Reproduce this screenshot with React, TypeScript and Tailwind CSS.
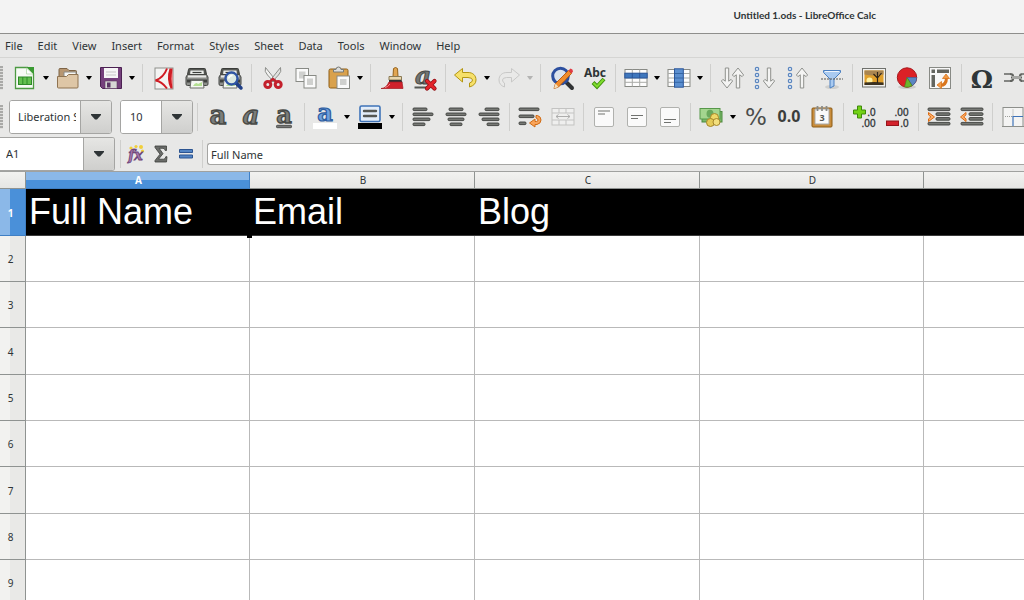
import React from "react";

type IconProps = { children: React.ReactNode };

function Icon({ children }: IconProps) {
  return (
    <svg viewBox="0 0 28 28" className="h-7 w-7 shrink-0 overflow-visible" aria-hidden="true">
      {children}
    </svg>
  );
}

function Tool({ label, children, disabled }: { label: string; children: React.ReactNode; disabled?: boolean }) {
  return (
    <button
      type="button"
      aria-label={label}
      disabled={disabled}
      className="flex h-9 w-[33px] shrink-0 items-center justify-center"
    >
      <Icon>{children}</Icon>
    </button>
  );
}

function Caret({ label, wide, faded }: { label: string; wide?: boolean; faded?: boolean }) {
  return (
    <button
      type="button"
      aria-label={label}
      disabled={faded}
      className={`flex h-9 shrink-0 items-center justify-center ${wide ? "w-3" : "w-[10px]"}`}
    >
      <svg viewBox="0 0 6 4" className={`h-1 w-1.5 ${faded ? "fill-[#b4b4b3]" : "fill-black"}`} aria-hidden="true">
        <path d="M0 0h6L3.6 3.6H2.4z" />
      </svg>
    </button>
  );
}

function Sep({ wide }: { wide?: boolean }) {
  return (
    <div className={`flex h-7 shrink-0 justify-center ${wide ? "w-[10px]" : "w-2"}`}>
      <div className="w-px bg-[#cfcfcd]" />
    </div>
  );
}

function Grip() {
  return (
    <div className="h-6 w-[3px] shrink-0 bg-[repeating-linear-gradient(to_bottom,#a9a9a7_0px,#a9a9a7_2px,#dededc_2px,#dededc_3px)]" />
  );
}

function DropButton({ label }: { label: string }) {
  return (
    <button
      type="button"
      aria-label={label}
      className="flex w-[31px] shrink-0 items-center justify-center border-l border-[#a5a5a3] bg-linear-to-b from-[#e6e6e4] to-[#cfcfcd]"
    >
      <svg viewBox="0 0 10 6" className="h-1.5 w-2.5 fill-[#2e3436]" aria-hidden="true">
        <path d="M0 0h10v1L6 5.6H4L0 1z" />
      </svg>
    </button>
  );
}

const ink = "#555753";
const edge = "#3b3d3a";

function LetterA({ italic, underline }: { italic?: boolean; underline?: boolean }) {
  return (
    <>
      <text
        x="14"
        y={underline ? 20 : 21}
        textAnchor="middle"
        fontFamily="DejaVu Serif, serif"
        fontWeight="bold"
        fontStyle={italic ? "italic" : "normal"}
        fontSize={underline ? 24 : 26}
        fill="#7b7d7a"
        stroke="#474946"
        strokeWidth="1.3"
      >
        a
      </text>
      {underline && <rect x="6.5" y="22.3" width="15" height="2.4" rx=".8" fill="#777" stroke={edge} strokeWidth=".8" />}
    </>
  );
}

function Lines({ rows }: { rows: number[][] }) {
  return (
    <>
      {rows.map(([x, y, w]) => (
        <rect key={y} x={x} y={y} width={w} height="2.6" rx="1" fill="#777975" stroke={edge} strokeWidth=".9" />
      ))}
    </>
  );
}

function DownArrow({ x }: { x: number }) {
  return (
    <path
      d={`M${x - 1.7} 4h3.4v13.2l2.4-1.8 1.5 1.6L${x} 24l-5.6-7 1.5-1.6 2.4 1.8z`}
      fill="#f4f4f3"
      stroke="#8f918d"
      strokeLinejoin="round"
    />
  );
}

function UpArrow({ x }: { x: number }) {
  return (
    <path
      d={`M${x - 1.7} 24h3.4V10.8l2.4 1.8 1.5-1.6L${x} 4l-5.6 7 1.5 1.6 2.4-1.8z`}
      fill="#f4f4f3"
      stroke="#8f918d"
      strokeLinejoin="round"
    />
  );
}

function Dots() {
  return (
    <>
      {[5, 11, 17, 23].map((y) => (
        <circle key={y} cx="6" cy={y} r="1.7" fill="#e6effa" stroke="#5b86bf" strokeWidth="1.2" />
      ))}
    </>
  );
}

function GridIcon({ column }: { column?: boolean }) {
  return (
    <>
      <rect x="3" y="5.5" width="22" height="17" fill="#fdfdfd" stroke="#888a85" />
      <path d="M3 9.5h22M3 14h22M3 18.3h22M10.3 5.5v17M17.7 5.5v17" stroke="#a9aba7" />
      {column ? (
        <>
          <rect x="9.5" y="4.8" width="8.8" height="18.4" fill="#5b8fd0" stroke="#2b569a" />
          <path d="M10 9.5h8M10 14h8M10 18.3h8" stroke="#3465a4" />
        </>
      ) : (
        <>
          <rect x="2.8" y="9.2" width="22.4" height="4.8" fill="#3f77bd" stroke="#2b569a" />
          <path d="M10.3 9v5M17.7 9v5" stroke="#2b569a" />
        </>
      )}
    </>
  );
}

function Page({ y }: { y: number }) {
  return (
    <>
      <rect x="4.5" y="4.5" width="19" height="19" rx="1.5" fill="#fafafa" stroke="#b0b1ae" />
      <path d={`M8 ${y}h12M8 ${y + 3}h7`} stroke="#70726f" strokeWidth="1.1" />
    </>
  );
}

function Printer() {
  return (
    <>
      <path d="M5.500 5.500q0-1 1-1h15q1 0 1 1l1 5H4.500z" fill="#555753" stroke="#3a3c39" />
      <path d="M7.500 6.500h13l.5 4.500H7z" fill="#eceeeb" />
      <path d="M9.500 8.500h9" stroke="#3a3c39" strokeWidth="1.200" />
      <path d="M4.500 10.500h19l1.500 2.500v7q0 1.500-1.500 1.500h-19Q3 21.500 3 20v-7z" fill="#8d8f8b" stroke="#454744" />
      <path d="M5 12.500h18" stroke="#e8e9e7" strokeWidth="2" />
      <path d="M4 15.500h20v3H4z" fill="#3f413e" />
      <path d="M8 16.500h12l1 7.500H7z" fill="#f5f7f2" stroke="#6a6c69" />
      <path d="M10 22q3-5 5-2l4-2v4z" fill="#b4e092" />
    </>
  );
}

function Indent({ back }: { back?: boolean }) {
  return (
    <>
      <Lines rows={[[3, 5, 22], [11, 9.8, 14], [11, 14.6, 14], [3, 19.4, 22]]} />
      <path
        d={back ? "M8 9.5v2.4l-2.4 2 2.4 2v2.6L2.5 14z" : "M3.5 9.5v2.4l2.4 2-2.4 2v2.6L9.5 14z"}
        fill="#fcaf6a"
        stroke="#dc6b13"
        strokeLinejoin="round"
      />
    </>
  );
}

function Decimals({ top, bottom }: { top: string; bottom: string }) {
  return (
    <g textAnchor="end" fontFamily="Liberation Sans, sans-serif" fontSize="10" fill="#2e3436" stroke="#2e3436" strokeWidth=".3">
      <text x="24.500" y="13">
        {top}
      </text>
      <text x="24.500" y="24">
        {bottom}
      </text>
    </g>
  );
}

const menus = ["File", "Edit", "View", "Insert", "Format", "Styles", "Sheet", "Data", "Tools", "Window", "Help"];

function StandardToolbar() {
  return (
    <div role="toolbar" className="flex h-[39px] items-center">
      <Grip />
      <div className="flex items-center pl-[5px]">
        <Tool label="New">
          <path d="M4.5 3.5h12l6 6v15h-18z" fill="#f7faf5" stroke="#4d9a43" strokeWidth="1.3" />
          <path d="M16 3h7v7z" fill="#3a9a32" />
          <path d="M15.500 4v6h6.500z" fill="#fff" stroke="#a6d49d" strokeWidth=".7" />
          <rect x="7.5" y="13" width="13" height="7.5" fill="#63c04f" stroke="#2f8a28" />
          <path d="M11.8 13v7.5M16 13v7.5" stroke="#2f8a28" />
        </Tool>
        <Caret label="New options" />
        <Tool label="Open">
          <path d="M5 5.5q0-1 1-1h7l2 2h6.5q1 0 1 1V16H5z" fill="#b79671" stroke="#7d6446" />
          <path d="M10 8h12v8H10z" fill="#f6f6f4" stroke="#8a8a86" />
          <path d="M3.500 12.500h9l2-2h9.500V23q0 1-1 1H4.500q-1 0-1-1z" fill="#dec6a6" stroke="#8f7351" />
        </Tool>
        <Caret label="Open options" />
        <Tool label="Save">
          <path d="M3.5 3.5h21v21h-19l-2-2z" fill="#75407c" stroke="#4b2152" />
          <rect x="7" y="4" width="14" height="10" fill="#f6f6f6" />
          <path d="M9 8h10M9 11h10" stroke="#c6c6c6" />
          <path d="M8 17h12v7.5H8z" fill="#d7d7d5" stroke="#5b3560" strokeWidth=".6" />
          <rect x="10" y="18.5" width="3.5" height="5" fill="#5c3566" />
        </Tool>
        <Caret label="Save options" />
        <Sep wide />
        <Tool label="Export as PDF">
          <rect x="5" y="4" width="18" height="21" fill="#f4f4f3" stroke="#8d8f8b" />
          <path d="M17 4.500C15 10 11 14.500 5.500 16.500 10 17 14 20.500 17 24.500" fill="none" stroke="#d01c24" strokeWidth="2" strokeLinejoin="bevel" />
          <path d="M22.500 4.500h-3q-3.500 10 1 20h2z" fill="#d01c24" />
          <path d="M22.500 6q-2 8.500 0 17z" fill="#f4a9ac" />
        </Tool>
        <Tool label="Print">
          <Printer />
        </Tool>
        <Tool label="Print Preview">
          <Printer />
          <path d="m20 19 5 5" stroke="#1f3f87" strokeWidth="3.5" strokeLinecap="round" />
          <circle cx="15.5" cy="14.500" r="6" fill="#dce9e2" stroke="#2f55a4" strokeWidth="2.4" />
          <path d="M12.5 14.500q1-3 4-3" fill="none" stroke="#fff" strokeWidth="1.5" />
        </Tool>
        <Sep wide />
        <Tool label="Cut">
          <path d="M6.5 3.5q-1.500 4 2 7.500l6.500 7 1.500-2z" fill="#f2f2f1" stroke="#8c8e8a" />
          <path d="M21.5 3.5q1.500 4-2 7.500L13 18l-1.500-2z" fill="#e1e2e0" stroke="#8c8e8a" />
          <circle cx="8.800" cy="20.5" r="3" fill="none" stroke="#c3202c" strokeWidth="3" />
          <circle cx="19.200" cy="20.5" r="3" fill="none" stroke="#c3202c" strokeWidth="3" />
          <path d="m11 17.5 3-2.500 3 2.500" fill="none" stroke="#c3202c" strokeWidth="2.400" />
        </Tool>
        <Tool label="Copy">
          <rect x="4" y="4.5" width="12.5" height="13" fill="#fafafa" stroke="#888a85" />
          <rect x="7" y="7.5" width="6.5" height="7" fill="#cfd0ce" />
          <rect x="12" y="11.5" width="12" height="12.5" fill="#fafafa" stroke="#888a85" />
          <rect x="15" y="14.5" width="6" height="6.5" fill="#cfd0ce" />
        </Tool>
        <Tool label="Paste">
          <rect x="4" y="5" width="19" height="19" rx="1.5" fill="#d9a14c" stroke="#8f5f17" />
          <path d="M8.5 8V5.500h2.500q0-2.500 2.500-2.500T16 5.500h2.500V8z" fill="#dcdddb" stroke="#777975" />
          <rect x="12" y="12" width="12.5" height="12.5" fill="#fafafa" stroke="#888a85" />
          <rect x="15" y="15" width="6.500" height="6" fill="#cfd0ce" />
        </Tool>
        <Caret label="Paste options" />
        <Sep wide />
        <Tool label="Clone Formatting">
          <path d="M15.5 4.5q2-2 4 0l.5 8h-5z" fill="#e0a552" stroke="#95631c" />
          <path d="M11 12.5h12.5V16H11z" fill="#e8d6ae" stroke="#8a7a55" />
          <path d="M11 16h12.5l1 2.500H11z" fill="#2f3133" />
          <path d="M11 18h13l1 6.500H3q5 0 8-6.500z" fill="#d0212b" stroke="#a21820" strokeWidth=".7" />
          <path d="M12 20q-2 3-5 3.500" stroke="#f08a90" fill="none" />
        </Tool>
        <Tool label="Clear Direct Formatting">
          <text x="12" y="20" textAnchor="middle" fontFamily="DejaVu Serif, serif" fontStyle="italic" fontWeight="bold" fontSize="25" fill="#747673" stroke="#474946" strokeWidth="1">
            a
          </text>
          <rect x="3.5" y="22.5" width="12" height="2" fill={ink} />
          <path d="m16 17 7.500 7.500m0-7.500L16 24.500" stroke="#8d0b10" strokeWidth="4.2" strokeLinecap="round" />
          <path d="m16 17 7.500 7.500m0-7.500L16 24.500" stroke="#e3242b" strokeWidth="2.8" strokeLinecap="round" />
        </Tool>
        <Sep />
        <Tool label="Undo">
          <path d="M2.5 11 10.500 4.500v4H16c5 0 8 3 8 7.500q0 5-6.500 7V19q3-.8 3-3t-4.500-2.500h-5.500v4.500z" fill="#f6e06a" stroke="#b39613" strokeLinejoin="round" />
        </Tool>
        <Caret label="Undo options" />
        <Tool label="Redo" disabled>
          <path d="M24.5 11 16.500 4.500v4H12c-5 0-8 3-8 7.500q0 5 5.500 7V19q-2-.8-2-3t4-2.500h5v4.500z" fill="#e9e9e8" stroke="#c8c8c7" strokeLinejoin="round" />
        </Tool>
        <Caret label="Redo options" faded />
        <Sep wide />
        <Tool label="Find & Replace">
          <path d="m18 18 6 6" stroke="#303234" strokeWidth="4" strokeLinecap="round" />
          <circle cx="12.5" cy="12" r="7.8" fill="#dbe3ee" stroke="#2c4f9f" strokeWidth="3" />
          <path d="m6 24.5 1.500-5L20.500 6.500l3 3L10.500 23z" fill="#f08c2c" stroke="#b4550c" strokeWidth=".9" />
          <path d="m20.5 6.5 2-2q2.500.5 2.500 3l-1.500 2z" fill="#e03a44" />
          <path d="m6 24.5 1.500-5 3 3.500z" fill="#f5deb8" />
        </Tool>
        <Tool label="Spelling">
          <text x="14" y="13" textAnchor="middle" fontFamily="Noto Sans, sans-serif" fontWeight="bold" fontSize="12" fill="#2e3436">
            Abc
          </text>
          <path d="m12 18.5 4 4 7-7.500" fill="none" stroke="#3f8f0c" strokeWidth="4" />
          <path d="m12.500 19 3.500 3.500 6.500-7" fill="none" stroke="#7fdc2e" strokeWidth="2.2" />
        </Tool>
        <Sep />
        <Tool label="Row">
          <GridIcon />
        </Tool>
        <Caret label="Row options" />
        <Tool label="Column">
          <GridIcon column />
        </Tool>
        <Caret label="Column options" />
        <Sep wide />
        <Tool label="Sort">
          <DownArrow x={9} />
          <UpArrow x={20} />
        </Tool>
        <Tool label="Sort Ascending">
          <Dots />
          <DownArrow x={18} />
        </Tool>
        <Tool label="Sort Descending">
          <Dots />
          <UpArrow x={18} />
        </Tool>
        <Tool label="AutoFilter">
          <ellipse cx="15" cy="23" rx="7" ry="2" fill="#cfcfcd" />
          <path d="M6.500 6.500h17v2l-6.500 6.500V22l-4 2v-9L6.500 8.500z" fill="#a9caf0" stroke="#4a7fc0" strokeLinejoin="round" />
          <path d="M8 7.500h14" stroke="#edf4fc" />
          <path d="M4 15h22" stroke="#555753" strokeDasharray="2 1" />
        </Tool>
        <Sep wide />
        <Tool label="Insert Image">
          <rect x="2.5" y="4.5" width="23" height="18.5" fill="#f0f0ee" stroke="#6f716d" />
          <rect x="4.5" y="6.5" width="19" height="14.5" fill="#e0a02c" />
          <path d="M4.500 6.500h19v4q-10 2-19 0z" fill="#a98550" />
          <circle cx="9.500" cy="16.500" r="3" fill="#fff0a0" />
          <path d="M4.500 18.500q10-1 19 0V21h-19z" fill="#3b3120" />
          <path d="M17.500 19v-5l-4-4m4 4 4-5m-4 4V8" fill="none" stroke="#2b2318" strokeWidth="1.200" />
        </Tool>
        <Tool label="Insert Chart">
          <ellipse cx="14" cy="23" rx="9" ry="2" fill="#cdcdcb" />
          <circle cx="14" cy="13.500" r="9.700" fill="#dc2026" stroke="#a8161a" />
          <path d="M14 13.500h9.700a9.700 9.700 0 0 1-4.500 8.200z" fill="#5a86c2" stroke="#37629f" strokeWidth=".6" />
          <path d="m14 13.500 5.200 8.200a9.700 9.700 0 0 1-7.700 1.200z" fill="#6cb52d" stroke="#44821a" strokeWidth=".6" />
        </Tool>
        <Tool label="Pivot Table">
          <rect x="3.5" y="3.5" width="21" height="21" fill="#f8f8f8" stroke="#888a85" />
          <path d="M5.5 5.500H9V9H5.500zM11 5.500h12V9H11zM5.500 11H9v12H5.500z" fill="#63655f" />
          <path d="M14 21.500q6.500 0 6.500-8" fill="none" stroke="#d9751c" strokeWidth="3" />
          <path d="m16.500 14.500 3.500-4.500 3.500 4.500zM15.500 17.500v7L11 21z" fill="#f29a45" stroke="#d9751c" strokeWidth=".8" />
        </Tool>
        <Sep wide />
        <Tool label="Special Character">
          <text x="13" y="23.500" textAnchor="middle" fontFamily="DejaVu Serif, serif" fontWeight="bold" fontSize="25" fill="#2f3638">
            Ω
          </text>
        </Tool>
        <Tool label="Insert Hyperlink">
          <path d="M2 10h6q3 0 3 2M2 17h6q3 0 3-2M26 10h-5q-3 0-3 2m8 5h-5q-3 0-3-2M9 13.500h11" fill="none" stroke="#61635f" strokeWidth="2.200" />
          <path d="M2 10h6M2 17h6M20 10h5M20 17h5M10 13.500h9" stroke="#b9bab7" strokeWidth=".8" />
        </Tool>
      </div>
    </div>
  );
}

function FormatToolbar() {
  return (
    <div role="toolbar" className="flex h-10 items-center">
      <Grip />
      <div className="ml-1.5 flex h-[34px] w-[103px] shrink-0 overflow-hidden rounded-[3px] border border-[#a5a5a3] bg-white">
        <input
          aria-label="Font Name"
          defaultValue="Liberation Sans"
          className="min-w-0 flex-1 bg-white pr-1 pl-2 text-[11px] text-[#2e3436] outline-none"
        />
        <DropButton label="Font list" />
      </div>
      <div className="ml-2 flex h-[34px] w-[73px] shrink-0 overflow-hidden rounded-[3px] border border-[#a5a5a3] bg-white">
        <input
          aria-label="Font Size"
          defaultValue="10"
          className="min-w-0 flex-1 bg-white pl-[9px] text-[11px] text-[#2e3436] outline-none"
        />
        <DropButton label="Size list" />
      </div>
      <Sep />
      <Tool label="Bold">
        <LetterA />
      </Tool>
      <Tool label="Italic">
        <LetterA italic />
      </Tool>
      <Tool label="Underline">
        <LetterA underline />
      </Tool>
      <Sep />
      <Tool label="Font Color">
        <text x="14" y="18" textAnchor="middle" fontFamily="DejaVu Serif, serif" fontWeight="bold" fontSize="24" fill="#6d9fdd" stroke="#2d5da0" strokeWidth="1.200">
          a
        </text>
        <rect x="2" y="20" width="24" height="6" fill="#fff" />
      </Tool>
      <Caret label="Font Color options" wide />
      <Tool label="Background Color">
        <rect x="4" y="3" width="20" height="15.5" rx="1.5" fill="#e3edf9" stroke="#3f73b8" strokeWidth="1.6" />
        <path d="M8 8h12M8 13h12" stroke={ink} strokeWidth="2.4" strokeLinecap="round" />
        <rect x="2" y="20" width="24" height="6" fill="#000" />
      </Tool>
      <Caret label="Background Color options" wide />
      <Sep />
      <Tool label="Align Left">
        <Lines rows={[[4, 5, 14], [4, 10, 20], [4, 15, 17], [4, 20, 12]]} />
      </Tool>
      <Tool label="Center Horizontally">
        <Lines rows={[[7, 5, 14], [4, 10, 20], [6, 15, 16], [8, 20, 12]]} />
      </Tool>
      <Tool label="Align Right">
        <Lines rows={[[10, 5, 14], [4, 10, 20], [7, 15, 17], [12, 20, 12]]} />
      </Tool>
      <Sep />
      <Tool label="Wrap Text">
        <Lines rows={[[3, 5, 20], [3, 12, 15], [3, 19, 7]]} />
        <path d="M20 12.500h1.500q3.500 1 3.500 4.500t-4 4.500h-2V24L13.500 20l5.500-4v2.500h1.500q1.500 0 1.500-1.500T20 15z" fill="#f9a45a" stroke="#cf6a14" strokeLinejoin="round" />
      </Tool>
      <Tool label="Merge Cells" disabled>
        <rect x="3" y="5.5" width="22" height="16.5" fill="#efefee" stroke="#c3c3c2" />
        <path d="M3 10h22M3 17h22M10 5.500V10m7-4.500V10m-7 7v5m7-5v5" stroke="#c3c3c2" />
        <path d="M7 13.500h14M9.500 11.500l-2.500 2 2.500 2m9-4 2.500 2-2.500 2" fill="none" stroke="#adadac" />
      </Tool>
      <Sep />
      <Tool label="Align Top">
        <Page y={8} />
      </Tool>
      <Tool label="Center Vertically">
        <Page y={12.5} />
      </Tool>
      <Tool label="Align Bottom">
        <Page y={16.5} />
      </Tool>
      <Sep />
      <Tool label="Format as Currency">
        <rect x="5" y="8.5" width="20" height="10.5" fill="#79b968" stroke="#4c8a40" />
        <rect x="3" y="5.5" width="20" height="10.5" fill="#a4d58f" stroke="#56984a" />
        <ellipse cx="13" cy="10.800" rx="3.5" ry="4" fill="#6aa85c" />
        <circle cx="17.5" cy="14.5" r="4" fill="#f0d868" stroke="#a5862a" />
        <circle cx="13.5" cy="19.5" r="4" fill="#e6cb58" stroke="#a5862a" />
        <circle cx="19.5" cy="19" r="3.5" fill="#f3df7d" stroke="#a5862a" />
      </Tool>
      <Caret label="Currency options" wide />
      <Tool label="Format as Percent">
        <text x="14" y="22" textAnchor="middle" fontFamily="DejaVu Sans, sans-serif" fontSize="23" fill="#4b4d4b">
          %
        </text>
      </Tool>
      <Tool label="Format as Number">
        <text x="14" y="19" textAnchor="middle" fontFamily="Noto Sans, sans-serif" fontWeight="bold" fontSize="16" fill="#3c3e3c">
          0.0
        </text>
      </Tool>
      <Tool label="Format as Date">
        <rect x="4" y="5" width="20" height="19" rx="1" fill="#c98d3c" stroke="#8b5a14" />
        <path d="M7 6h14v15H7z" fill="#fafafa" stroke="#a9a9a7" />
        <path d="M9.500 3v5M14 3v5M18.500 3v5" stroke="#8a8c88" strokeWidth="1.800" />
        <text x="14" y="17.5" textAnchor="middle" fontFamily="Noto Sans, sans-serif" fontWeight="bold" fontSize="9" fill="#555753">
          3
        </text>
      </Tool>
      <Sep wide />
      <Tool label="Add Decimal Place">
        <path d="M6.500 3h4v4h4v4h-4v4h-4v-4h-4V7h4z" fill="#73d216" stroke="#3f8a0a" />
        <Decimals top=".0" bottom=".00" />
      </Tool>
      <Tool label="Delete Decimal Place">
        <rect x="2.5" y="18" width="12" height="4.5" fill="#d3222c" stroke="#96141b" />
        <Decimals top=".00" bottom=".0" />
      </Tool>
      <Sep />
      <Tool label="Increase Indent">
        <Indent />
      </Tool>
      <Tool label="Decrease Indent">
        <Indent back />
      </Tool>
      <Sep />
      <Tool label="Borders">
        <rect x="4" y="4.5" width="20" height="19" fill="#f4f4f3" stroke="#8d8f8b" />
        <path d="M3 23.500h22" stroke="#8d8f8b" />
        <path d="M6 13.500h8M14 6.500v7" stroke="#9b9d99" strokeDasharray="1 1" />
        <path d="M14 23V13.500h10" fill="none" stroke="#3f73b8" strokeWidth="1.200" />
      </Tool>
    </div>
  );
}

function FormulaBar() {
  return (
    <div className="flex h-[34px] items-center">
      <div className="flex h-[34px] w-[115px] shrink-0 overflow-hidden rounded-r-[3px] border-y border-r border-[#a5a5a3] bg-white">
        <input
          aria-label="Name Box"
          defaultValue="A1"
          className="min-w-0 flex-1 bg-white pl-1.5 text-[11px] text-[#2e3436] outline-none"
        />
        <DropButton label="Name list" />
      </div>
      <Sep wide />
      <button type="button" aria-label="Function Wizard" className="flex h-7 w-[22px] shrink-0 items-center justify-center">
        <svg viewBox="0 0 18 18" className="h-[18px] w-[18px] overflow-visible" aria-hidden="true">
          <g fill="#f1cf3a">
            <circle cx="4" cy="3" r="1.600" />
            <circle cx="9" cy="1.500" r="1.600" />
            <circle cx="14" cy="2" r="2" />
            <circle cx="15.500" cy="6" r="1.600" />
          </g>
          <text x="8.500" y="15" textAnchor="middle" fontFamily="DejaVu Serif, serif" fontStyle="italic" fontWeight="bold" fontSize="14" fill="#a77bb0" stroke="#6f477a" strokeWidth=".9">
            fx
          </text>
        </svg>
      </button>
      <button type="button" aria-label="Select Function" className="flex h-7 w-7 shrink-0 items-center justify-center">
        <svg viewBox="0 0 14 18" className="h-[18px] w-3.5" aria-hidden="true">
          <path d="M1 1h11.500v4.500h-1.300Q11 3.300 9 3.300H5.200L9 8.700l-4.500 5.500H9.500q2 0 2.300-2.500H13L12.500 17H1v-1.500l5-6.300L1 2.500z" fill="#6a6c69" stroke={edge} strokeWidth=".8" />
        </svg>
      </button>
      <button type="button" aria-label="Formula" className="flex h-7 w-[22px] shrink-0 items-center justify-center">
        <svg viewBox="0 0 14 10" className="h-2.5 w-3.5" aria-hidden="true">
          <path d="M.5.5h13v3H.5zM.5 6h13v3H.5z" fill="#5284c4" stroke="#2c5491" />
        </svg>
      </button>
      <Sep wide />
      <input
        aria-label="Input line"
        defaultValue="Full Name"
        className="h-[22px] min-w-0 flex-1 rounded-l-[3px] border-y border-l border-[#a5a5a3] bg-white pl-[3px] text-[11px] text-[#2e3436] outline-none"
      />
    </div>
  );
}

const columns = ["A", "B", "C", "D", ""];
const headings = ["Full Name", "Email", "Blog", "", ""];
const rows = [2, 3, 4, 5, 6, 7, 8, 9];

function Sheet() {
  return (
    <table className="w-full table-fixed border-separate border-spacing-0 bg-white">
      <colgroup>
        <col className="w-[26px]" />
        <col className="w-56" />
        <col className="w-[225px]" />
        <col className="w-[225px]" />
        <col className="w-56" />
        <col />
      </colgroup>
      <thead>
        <tr className="h-[17px] text-[10px] leading-4 text-[#2e3436]">
          <td className="border-r border-b border-[#8f9391] bg-linear-to-b from-[#f2f2f0] to-[#e6e6e4] p-0" />
          {columns.map((c, i) => (
            <th
              key={i}
              scope="col"
              className={
                i === 0
                  ? "border-r border-b border-[#3f7fc4] bg-[linear-gradient(to_bottom,#8bb8e8_50%,#4a90d9_50%)] p-0 pl-0.5 font-bold text-white"
                  : i === columns.length - 1
                    ? "border-b border-[#8f9391] bg-linear-to-b from-[#f2f2f0] to-[#e6e6e4] p-0 font-normal"
                    : "border-r border-b border-[#8f9391] bg-linear-to-b from-[#f2f2f0] to-[#e6e6e4] p-0 pl-0.5 font-normal"
              }
            >
              {c}
            </th>
          ))}
        </tr>
      </thead>
      <tbody className="text-[10px] text-[#2e3436]">
        <tr className="h-[47px]">
          <th
            scope="row"
            className="border-r border-b border-[#3f7fc4] bg-[linear-gradient(to_right,#8bb8e8_40%,#4a90d9_40%)] p-0 pt-0.5 pr-1 text-center font-bold text-white"
          >
            1
          </th>
          {headings.map((h, i) => (
            <td
              key={i}
              className="relative border-b border-[#3a3a3a] bg-black p-0 pl-[3px] font-['Liberation_Sans',Arial,sans-serif] text-[36px] leading-[46px] whitespace-nowrap text-white"
            >
              {h}
              {i === 0 && <span className="absolute -right-[2px] -bottom-[3px] z-10 h-1 w-[5px] bg-black" />}
            </td>
          ))}
        </tr>
        {rows.map((r) => (
          <tr key={r} className="h-[46px] nth-[3n+1]:h-[47px]">
            <th
              scope="row"
              className="border-r border-b border-[#8f9391] bg-[linear-gradient(to_right,#f2f2f0_40%,#e9e9e7_40%)] p-0 pt-0.5 pr-1 text-center font-normal"
            >
              {r}
            </th>
            {columns.map((c, i) => (
              <td
                key={i}
                className={i === columns.length - 1 ? "border-b border-[#b9b9b9] p-0" : "border-r border-b border-[#b9b9b9] p-0"}
              />
            ))}
          </tr>
        ))}
      </tbody>
    </table>
  );
}

export default function App() {
  return (
    <div className="flex h-screen flex-col overflow-hidden bg-[#e8e8e7] font-['Noto_Sans',sans-serif] text-[#2e3436]">
      <header className="flex h-[34px] shrink-0 items-center justify-end border-b border-[#8e8e8c] bg-[#f3f3f3] pr-[148px] pb-1">
        <h1 className="font-[Lato,sans-serif] text-[10px] leading-4 font-bold whitespace-nowrap">
          Untitled 1.ods - LibreOffice Calc
        </h1>
      </header>
      <nav className="flex h-6 shrink-0 items-center gap-[15px] border-b border-[#d5d5d3] pl-[5px] text-[11px] leading-4">
        {menus.map((m) => (
          <button key={m} type="button">
            {m}
          </button>
        ))}
      </nav>
      <div className="shrink-0 overflow-hidden">
        <StandardToolbar />
        <FormatToolbar />
        <FormulaBar />
      </div>
      <main className="min-h-0 flex-1 overflow-hidden border-t border-[#a0a19f]">
        <Sheet />
      </main>
    </div>
  );
}
